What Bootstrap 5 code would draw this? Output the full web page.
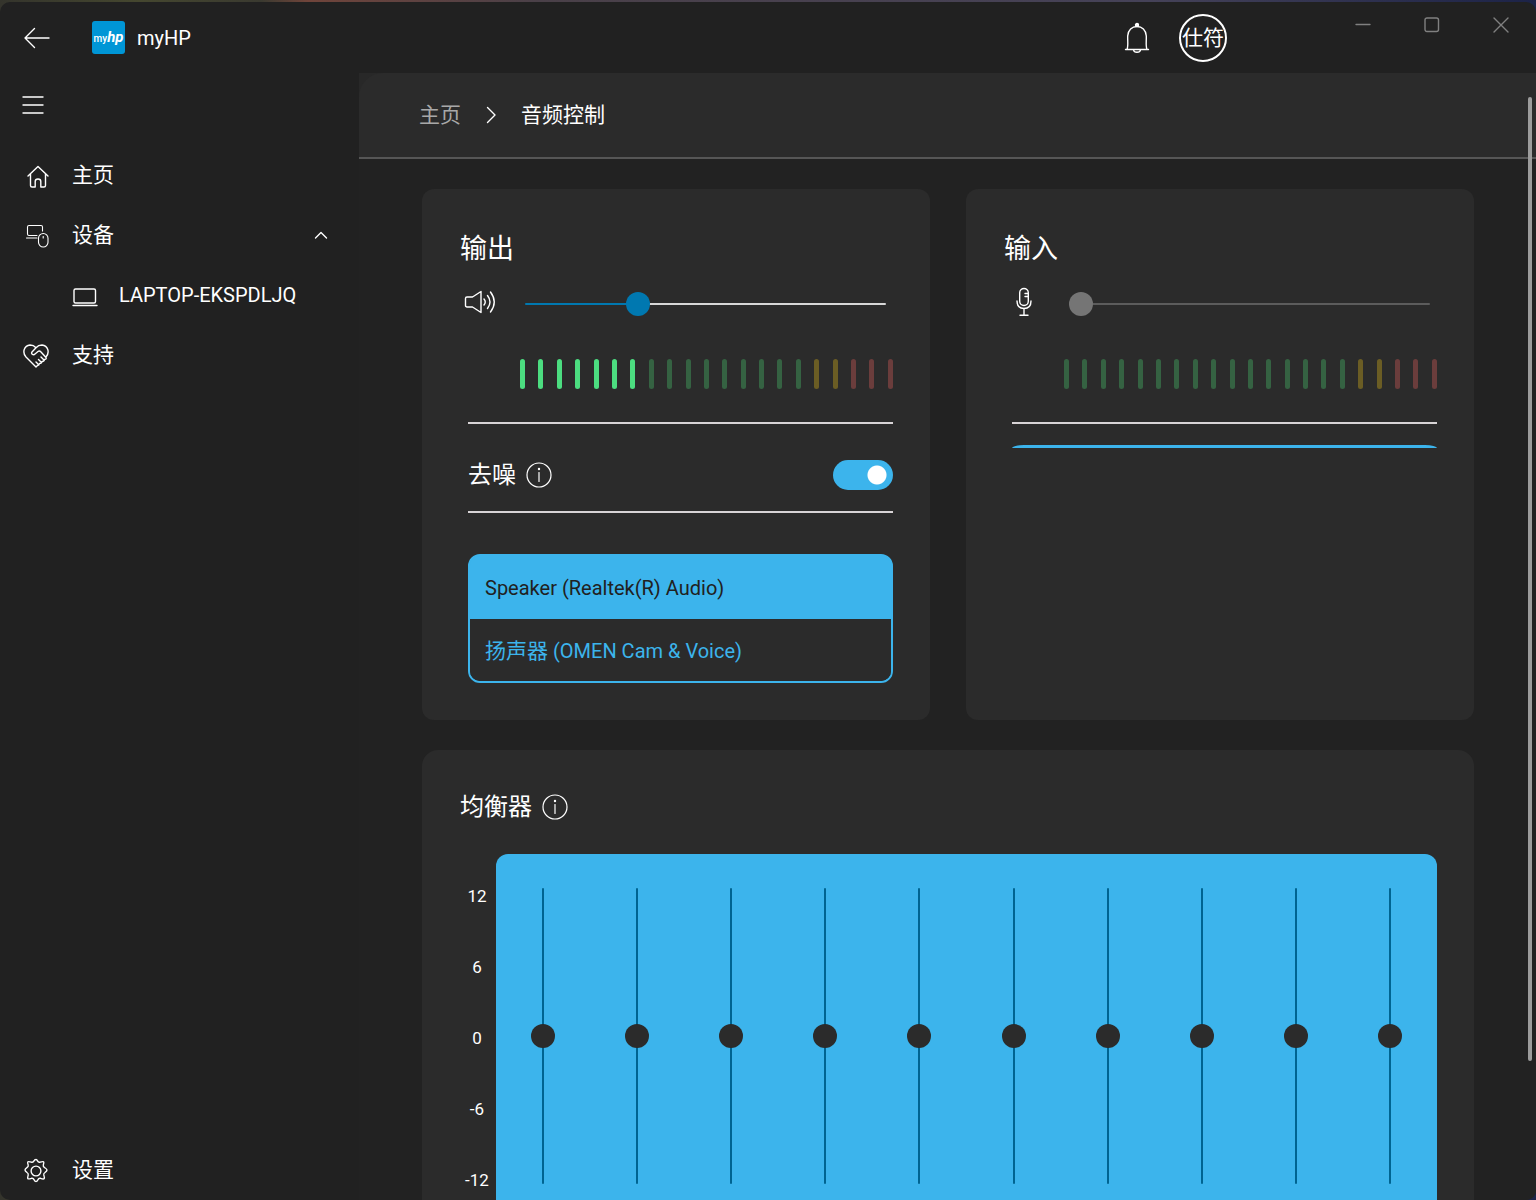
<!DOCTYPE html>
<html lang="zh-CN" data-bs-theme="dark">
<head>
<meta charset="utf-8">
<meta name="viewport" content="width=device-width, initial-scale=1">
<title>myHP</title>
<link href="https://cdn.jsdelivr.net/npm/bootstrap@5.3.0/dist/css/bootstrap.min.css" rel="stylesheet">
<style>
:root{--app-blue:#3cb4ec;--app-card:#2b2b2b;--app-bg:#212121}
body{font-family:Roboto,"Noto Sans CJK SC",sans-serif;font-size:20px;line-height:30px;color:#fff;background:linear-gradient(90deg,#34342c 0,#45472f 9%,#3a3a30 17%,#70443a 20%,#4a4048 35%,#454258 75%,#1c2348 100%)}
svg{fill:none;stroke:currentColor;stroke-width:1.4;stroke-linecap:round;stroke-linejoin:round;flex:none;display:block}
a{color:inherit;text-decoration:none}
.zh{font-size:21px}
.app-window{height:100vh;padding-top:2px}
.app-shell{background:var(--app-bg);border-radius:10px;overflow:hidden}
.titlebar{height:71px;padding-left:24px;padding-right:1px}
.plain-btn{background:none;border:0;padding:0;color:inherit}
.app-logo{width:33px;height:33px;margin-left:41px;background:#0096d6;border-radius:3px;font-size:10px;line-height:33px;font-weight:500}
.app-logo i{font-size:15px;font-weight:700}
.avatar{width:48px;height:48px;border:2px solid #fff;margin-left:29px;margin-right:101px}
.win-btn{width:69px;height:45px;color:#808080}
.sidebar{width:359px}
.menu-btn{margin:21px 0 28px 22px}
.side-link{height:60px;padding-left:23px;padding-right:31px}
.side-link .ico{width:49px;padding-top:2px}
.side-link .thin{stroke-width:1.1}
.side-sub{padding-left:72px;font-size:20px}
.side-sub .ico{width:47px}
.content-area{background:#282828}
.crumb-bar{height:86px;padding-left:60px;background:var(--app-card);border-bottom:2px solid #565656;border-top-left-radius:24px;font-size:21px}
.crumb-old{color:#a8a8a8}
.page-body{background:#222;padding:30px 62px 30px 63px}
.card-row{--bs-gutter-x:36px}
.panel{background:var(--app-card);border-radius:12px;padding:40px 37px 37px 38px}
.panel-title{font-size:27px;line-height:40px;font-weight:400;margin:0}
.vol-row{margin-top:19px;height:32px;padding-right:7px}
.vol-row .ico{width:65px;padding-left:4px}
.level{height:30px;margin:39px 0 33px 60px}
.level span{width:5px;border-radius:3px;background:#356242}
.level .on{background:#4cdd80}.level .mid{background:#6b5d24}.level .high{background:#6b3d3c}
.rule{height:2px;margin-left:8px;background:#d8d4d6}
.denoise{height:87px;padding-top:15px;margin-left:8px;font-size:24px}
.info-ico{stroke-width:1.2}
.app-switch{width:60px!important;height:30px;margin:0!important;border:0;background-color:var(--app-blue)!important;background-image:radial-gradient(circle,#fff 9px,transparent 10px)!important;background-size:32px 30px;background-position:right center!important}
.device-list{margin:41px 0 0 8px;border:2px solid var(--app-blue);border-radius:12px;background:linear-gradient(var(--app-blue) 50%,var(--app-card) 50%);--bs-list-group-bg:var(--app-card);--bs-list-group-color:var(--app-blue);--bs-list-group-active-bg:var(--app-blue);--bs-list-group-active-color:#212121}
.device-list .list-group-item{border:0;padding:17px 15px 15px;height:62px;border-radius:0 0 10px 10px}
.device-list .active{height:63px;border-radius:10px 10px 0 0;margin:0}
.empty-list{margin:21px 0 0 8px;height:3px;background:var(--app-blue);border-radius:12px 12px 0 0/3px 3px 0 0}
input[type=range]{-webkit-appearance:none;appearance:none;background:none;margin:0;display:block}
.hs{height:24px;--line:#d8d8d8;--knob:#0078b0;--fill:0%}
.hs::-webkit-slider-runnable-track{height:2px;border-radius:1px;background:linear-gradient(90deg,var(--knob) var(--fill),var(--line) var(--fill))}
.hs::-webkit-slider-thumb{-webkit-appearance:none;width:24px;height:24px;border-radius:50%;margin-top:-11px;background:var(--knob)}
.hs:disabled{--line:#5c5c5c;--knob:#757575}
.eq-panel{margin-top:30px;border-radius:16px;padding-top:37px}
.eq-head{font-size:24px;line-height:40px;font-weight:400;margin:0}
.eq-wrap{margin-top:27px}
.eq-scale{width:36px;padding-top:27px;font-size:17px;gap:41px}
.eq-scale span{padding-right:2px}
.eq-board{background:var(--app-blue);border-radius:12px;height:364px;padding-top:34px}
.vs{writing-mode:vertical-lr;direction:rtl;width:24px;height:296px}
.vs::-webkit-slider-runnable-track{width:2px;border-radius:1px;background:#006491}
.vs::-webkit-slider-thumb{-webkit-appearance:none;width:24px;height:24px;border-radius:50%;margin-left:-11px;background:#2b2b2b}
.scroll-mark{position:absolute;right:4px;top:24px;width:4px;height:calc(100% - 163px);border-radius:2px;background:#9c9c9c}
</style>
<script src="https://cdn.jsdelivr.net/npm/bootstrap@5.3.0/dist/js/bootstrap.bundle.min.js"></script>
</head>
<body>
<div class="app-window">
<div class="app-shell d-flex flex-column h-100">
  <header class="titlebar d-flex align-items-center flex-shrink-0">
    <button class="plain-btn" aria-label="返回"><svg width="27" height="24" viewBox="0 0 27 24"><path d="M10.500 2.500 1 12l9.500 9.500M1 12H25"/></svg></button>
    <span class="app-logo text-center">my<i>hp</i></span>
    <span class="ms-2 ps-1">myHP</span>
    <button class="plain-btn ms-auto" aria-label="通知"><svg width="26" height="32" viewBox="0 0 26 32"><circle cx="13" cy="3" r="1.500" fill="currentColor"/><path d="M1.500 27.500h23M3 27.500C4.500 24 3.500 19 3.700 14 4 8 8 4.500 13 4.500S22 8 22.300 14c.2 5-.8 10 .7 13.500M9.500 28c.5 3 6.500 3 7 0"/></svg></button>
    <button class="plain-btn avatar rounded-circle zh d-flex align-items-center justify-content-center text-nowrap">仕符</button>
    <div class="d-flex align-self-start">
      <button class="plain-btn win-btn d-flex align-items-center justify-content-center" aria-label="最小化"><svg width="16" height="16" viewBox="0 0 16 16"><path d="M1 7.500h14"/></svg></button>
      <button class="plain-btn win-btn d-flex align-items-center justify-content-center" aria-label="最大化"><svg width="16" height="16" viewBox="0 0 16 16"><rect x="1" y="1" width="13.500" height="13.500" rx="2"/></svg></button>
      <button class="plain-btn win-btn d-flex align-items-center justify-content-center" aria-label="关闭"><svg width="16" height="16" viewBox="0 0 16 16"><path d="m1 1 14 14M15 1 1 15"/></svg></button>
    </div>
  </header>
  <div class="d-flex flex-fill overflow-hidden">
    <nav class="sidebar d-flex flex-column flex-shrink-0 zh">
      <button class="plain-btn menu-btn align-self-start" aria-label="菜单"><svg width="22" height="23" viewBox="0 0 22 23"><path d="M1 3h20M1 11h20M1 19h20"/></svg></button>
      <a href="#" class="side-link d-flex align-items-center"><span class="ico"><svg width="30" height="26" viewBox="0 0 30 26"><path d="m5 13 10-9.500L25 13M7.500 11v11.500q0 1.500 1.500 1.500h3.200v-5.500q0-2.500 2.800-2.500t2.800 2.500V24H21q1.500 0 1.500-1.500V11"/></svg></span>主页</a>
      <a href="#" class="side-link d-flex align-items-center"><span class="ico"><svg class="thin" width="28" height="26" viewBox="0 0 28 26"><path d="M14 12.500H6q-1.500 0-1.500-1.500V4Q4.500 2.500 6 2.500h12q1.500 0 1.500 1.500v4M3.500 15H14"/><rect x="15.500" y="10.500" width="9.500" height="13.500" rx="4.700"/><path d="M20.200 13.500v1.500"/></svg></span>设备<svg class="ms-auto" width="14" height="10" viewBox="0 0 14 10"><path d="m1.500 8 5.500-5.500 5.500 5.500"/></svg></a>
      <a href="#" class="side-link side-sub d-flex align-items-center"><span class="ico"><svg width="26" height="24" viewBox="0 0 26 24"><rect x="2" y="5" width="21.500" height="14" rx="1.500"/><path d="M1 21.500h24"/></svg></span>LAPTOP-EKSPDLJQ</a>
      <a href="#" class="side-link d-flex align-items-center"><span class="ico"><svg width="26" height="26" viewBox="0 0 26 26"><path d="M13 24 3 14C-1 9.500 1 2.500 7 2c3 0 4.500 1 6 2.700C14.500 3 16 2 19 2c6 .5 8 7.500 4 12M13 4.700 9 9c-1.500 2 1.500 3.500 3 2l3-2.500c1-.7 2-.5 3 .5l5 5.500q.8 1.700-1.500 2-.3 2-2.500 2-.3 2-2.500 2-.3 2-2 2L13 24M13 19l2.500 2.500M15.500 16.500 18 19M18 14l2.500 2.500"/></svg></span>支持</a>
      <a href="#" class="side-link d-flex align-items-center mt-auto"><span class="ico"><svg width="26" height="26" viewBox="0 0 26 26"><circle cx="13" cy="13" r="4.900"/><path d="M13 1.500q1 0 1.500 1.400.8 1.700 2.500 1.300 3-1 3.600-.4t-.3 3.200q-.4 1.700 1.200 2.500 2.500 1.500 2.500 2.500 0 1-2 2.500-1.600 1-1.200 2.500 1 3 .3 3.700t-3.600-.4q-1.700-.4-2.500 1.300-.5 1.900-2 1.900t-2-1.900q-.8-1.700-2.500-1.300-3 1-3.600.4t.3-3.700q.4-1.500-1.200-2.500-2-1.500-2-2.500 0-1 2-2.500 1.600-.8 1.200-2.500-1-2.600-.3-3.200t3.600.4q1.700.4 2.500-1.300.5-1.400 2-1.400z"/></svg></span>设置</a>
    </nav>
    <main class="content-area flex-fill position-relative overflow-hidden">
      <nav class="crumb-bar d-flex align-items-center" aria-label="导航路径">
        <a href="#" class="crumb-old">主页</a>
        <svg class="mx-4" width="12" height="18" viewBox="0 0 12 18"><path d="m2.500 1.500 7.500 7.500-7.500 7.500"/></svg>
        <span>音频控制</span>
      </nav>
      <div class="page-body">
        <div class="row card-row">
          <div class="col-6"><section class="panel h-100">
            <h2 class="panel-title">输出</h2>
            <div class="vol-row d-flex align-items-center">
              <label class="ico flex-shrink-0 pb-1" for="out" aria-label="输出音量"><svg width="32" height="26" viewBox="0 0 32 26"><path d="M1.500 9.500q0-1.500 1.500-1.500h5.500l8.500-5.500v21L8.500 18H3q-1.500 0-1.500-1.500zM20 10q2.500 3 0 6M23.500 6.500q5 6.500 0 13M26.500 3q7.500 10 0 20"/></svg></label>
              <input id="out" class="hs flex-fill" type="range" value="30" style="--fill:30%">
            </div>
            <div class="level d-flex justify-content-between" data-on="7"></div>
            <div class="rule"></div>
            <div class="denoise d-flex align-items-center">
              <label for="dn">去噪</label>
              <svg class="info-ico ms-2" width="30" height="28" viewBox="0 0 30 28"><circle cx="15" cy="14" r="12"/><path d="M15 11.500v9"/><circle cx="15" cy="8" r=".6" fill="currentColor"/></svg>
              <div class="form-switch ms-auto p-0 d-flex"><input id="dn" class="form-check-input app-switch" type="checkbox" role="switch" checked></div>
            </div>
            <div class="rule"></div>
            <div class="device-list list-group">
              <a href="#" class="list-group-item active">Speaker (Realtek(R) Audio)</a>
              <a href="#" class="list-group-item"><span class="zh">扬声器</span> (OMEN Cam &amp; Voice)</a>
            </div>
          </section></div>
          <div class="col-6"><section class="panel h-100">
            <h2 class="panel-title">输入</h2>
            <div class="vol-row d-flex align-items-center">
              <label class="ico flex-shrink-0 pb-1" for="in" aria-label="输入音量"><svg width="32" height="30" viewBox="0 0 32 30"><rect x="11.700" y="1.500" width="8.600" height="17" rx="4.300"/><path d="M9 14q0 7.500 7 7.500t7-7.500M16 21.500v6.700M12 28.200h8M17 6.500h3M17 9.500h3"/></svg></label>
              <input id="in" class="hs flex-fill" type="range" value="0" disabled>
            </div>
            <div class="level d-flex justify-content-between" data-on="0"></div>
            <div class="rule"></div>
            <div class="empty-list"></div>
          </section></div>
        </div>
        <section class="panel eq-panel">
          <h2 class="eq-head d-flex align-items-center">均衡器 <svg class="info-ico ms-2" width="30" height="28" viewBox="0 0 30 28"><circle cx="15" cy="14" r="12"/><path d="M15 11.500v9"/><circle cx="15" cy="8" r=".6" fill="currentColor"/></svg></h2>
          <div class="eq-wrap d-flex">
            <div class="eq-scale d-flex flex-column text-center"><span>12</span><span>6</span><span>0</span><span>-6</span><span>-12</span></div>
            <div class="eq-board d-flex flex-fill" id="eq"></div>
          </div>
        </section>
      </div>
      <div class="scroll-mark"></div>
    </main>
  </div>
</div>
</div>
<script>
document.querySelectorAll('.level').forEach(function(el){
  for(let i=0;i<21;i++){
    const s=document.createElement('span');
    s.className=i<+el.dataset.on?'on':i>17?'high':i>15?'mid':'';
    el.append(s);
  }
});
for(let i=1;i<=10;i++){
  document.getElementById('eq').insertAdjacentHTML('beforeend','<div class="flex-fill d-flex justify-content-center"><input class="vs" type="range" min="-12" max="12" value="0" aria-label="频段 '+i+'"></div>');
}
</script>
</body>
</html>
